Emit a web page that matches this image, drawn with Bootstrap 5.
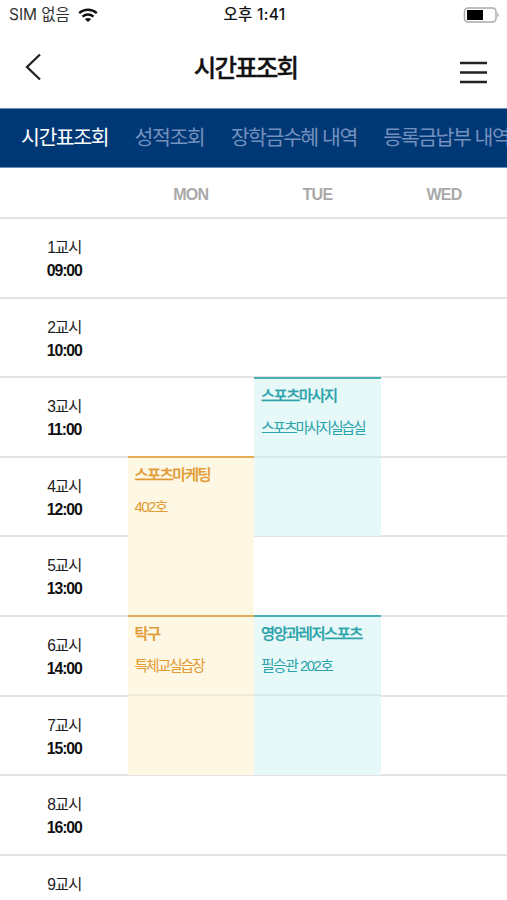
<!DOCTYPE html>
<html lang="ko">
<head>
<meta charset="utf-8">
<meta name="viewport" content="width=device-width, initial-scale=1">
<title>시간표조회</title>
<link href="https://cdn.jsdelivr.net/npm/bootstrap@5.3.0/dist/css/bootstrap.min.css" rel="stylesheet">
<style>
body{font-family:"Liberation Sans","Noto Sans CJK KR",sans-serif;color:#222;background:#fff;height:900px;overflow:hidden}
.status{height:30px;padding:0 7px 0 9px;font:400 15.5px/30px Inter,"Noto Sans CJK KR",sans-serif;letter-spacing:-.05px;color:#333}
.status .clock{color:#111;font-weight:500;font-size:15.5px;letter-spacing:.3px}
.appbar{height:78px;padding:0 20px 0 24px}
.appbar h1{font-size:24.5px;font-weight:500;letter-spacing:-1.85px;color:#111;line-height:36px;-webkit-text-stroke:.3px #111;padding-right:13px}
.tabs{height:60px;background:#003876;border-top:1px solid #6f8fb8;border-bottom:1px solid #6f8fb8;padding-left:21px;gap:26.5px}
.tabs a{font-size:20.5px;letter-spacing:-1.45px;color:#7490bd;line-height:58px;text-decoration:none}
.tabs a.current{color:#fff}
.sheet{display:grid;grid-template-columns:127.5px 126.5px 127px 126px;grid-template-rows:51px repeat(9,79.6px)}
.rule{grid-column:1/-1;border-bottom:2px solid #e3e3e3}
.day{font-size:16px;font-weight:700;letter-spacing:-.7px;color:#a9a9a9;grid-row:1;padding-top:2px}
.slot{grid-column:1;padding-top:17px;text-align:center;font-size:15.6px;line-height:23px;letter-spacing:-1.1px;padding-left:1px}
.slot b{color:#111;font-size:15.8px;letter-spacing:-1.1px}
.lesson{position:relative;top:-1.5px;font-size:15.3px;line-height:22px;white-space:nowrap}
.lesson>div{border-top:2px solid;padding:6px 0 0 7px;height:81px}
.lesson b{display:block;letter-spacing:-1.45px;font-weight:500;-webkit-text-stroke:.25px}
.lesson span{display:block;letter-spacing:-2.1px;margin-top:10px;font-size:14.8px}
.lesson span.room{letter-spacing:-1.5px}
.lesson.split>div{border-bottom:2px solid}
.amber{background:#fef7e4;color:#e29a32}
.amber>div{border-top-color:#e5ad55}
.amber.split>div{border-bottom-color:#f0ead8}
.aqua{background:#e7f8f8;color:#2aa3aa}
.aqua>div{border-top-color:#49b1b6}
.aqua.split>div{border-bottom-color:#d6e8e8}
.r2{grid-row:2}.r3{grid-row:3}.r4{grid-row:4}.r5{grid-row:5}.r6{grid-row:6}.r7{grid-row:7}.r8{grid-row:8}.r9{grid-row:9}.r10{grid-row:10}
.c2{grid-column:2}.c3{grid-column:3}.c4{grid-column:4}
.from4{grid-row:4/span 2}.from5{grid-row:5/span 2}.from7{grid-row:7/span 2}
</style>
<script src="https://cdn.jsdelivr.net/npm/bootstrap@5.3.0/dist/js/bootstrap.bundle.min.js"></script>
</head>
<body>
<div class="status d-flex align-items-center">
  <div class="d-flex align-items-center col gap-2"><span>SIM 없음</span>
    <svg width="20" height="15" viewBox="0 0 20 15" fill="none" stroke="#111" stroke-width="2.3"><path d="M1.2 5.2C6.2.6 13.800.6 18.800 5.2M4.500 8.600c3.200-2.800 7.800-2.800 11 0"/><path d="M10 14 6.900 11.200c1.800-1.500 4.400-1.500 6.200 0z" fill="#111" stroke="none"/></svg>
  </div>
  <span class="clock">오후 1:41</span>
  <div class="col d-flex justify-content-end">
    <svg width="38" height="16" viewBox="0 0 38 16"><rect x="2.500" y="1" width="31.500" height="14" rx="3.500" fill="#fff" stroke="#aaa" stroke-width="1.500"/><rect x="5" y="3" width="16" height="10" fill="#000"/><path d="M35.500 5.500q2.500 2.500 0 5z" fill="#999"/></svg>
  </div>
</div>
<header class="appbar d-flex align-items-center justify-content-between">
  <svg width="20" height="28" viewBox="0 0 20 28" fill="none" stroke="#222" stroke-width="2.300" style="margin-top:-4px"><path d="M16 1.500 3 14l13 12.500"/></svg>
  <h1 class="m-0">시간표조회</h1>
  <svg width="27" height="24" viewBox="0 0 27 24" stroke="#222" stroke-width="2.700" style="margin-top:7px"><path d="M0 2h27M0 11.500h27M0 21h27"/></svg>
</header>
<nav class="tabs d-flex text-nowrap overflow-hidden">
  <a class="current" href="#">시간표조회</a><a href="#">성적조회</a><a href="#">장학금수혜 내역</a><a href="#">등록금납부 내역</a>
</nav>
<main class="sheet">
  <div class="rule" style="grid-row:1"></div>
  <div class="rule r2"></div><div class="rule r3"></div><div class="rule r4"></div><div class="rule r5"></div><div class="rule r6"></div><div class="rule r7"></div><div class="rule r8"></div><div class="rule r9"></div><div class="rule r10"></div>
  <div class="day c2 d-flex align-items-center justify-content-center">MON</div>
  <div class="day c3 d-flex align-items-center justify-content-center">TUE</div>
  <div class="day c4 d-flex align-items-center justify-content-center">WED</div>
  <div class="slot r2">1교시<br><b>09:00</b></div>
  <div class="slot r3">2교시<br><b>10:00</b></div>
  <div class="slot r4">3교시<br><b>11:00</b></div>
  <div class="slot r5">4교시<br><b>12:00</b></div>
  <div class="slot r6">5교시<br><b>13:00</b></div>
  <div class="slot r7">6교시<br><b>14:00</b></div>
  <div class="slot r8">7교시<br><b>15:00</b></div>
  <div class="slot r9">8교시<br><b>16:00</b></div>
  <div class="slot r10">9교시</div>
  <section class="lesson aqua split c3 from4"><div><b>스포츠마사지</b><span>스포츠마사지실습실</span></div></section>
  <section class="lesson amber c2 from5"><div><b>스포츠마케팅</b><span class="room">402호</span></div></section>
  <section class="lesson amber split c2 from7"><div><b>탁구</b><span>특체교실습장</span></div></section>
  <section class="lesson aqua split c3 from7"><div><b>영양과레저스포츠</b><span class="room">필승관 202호</span></div></section>
</main>
</body>
</html>
